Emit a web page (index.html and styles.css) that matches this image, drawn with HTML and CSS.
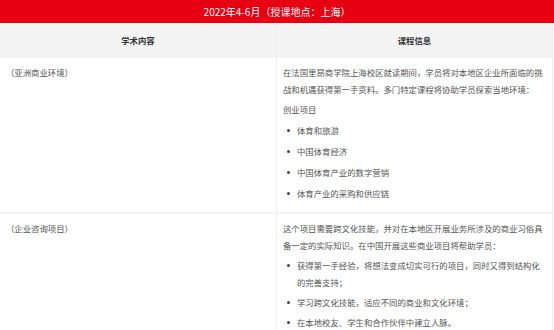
FILE: index.html
```html
<!DOCTYPE html>
<html lang="zh">
<head>
<meta charset="utf-8">
<link rel="stylesheet" href="styles.css">
</head>
<body>
<div class="title">2022年4-6月（授课地点：上海）</div>
<div class="table">
  <div class="row head">
    <div class="cell">学术内容</div>
    <div class="cell">课程信息</div>
  </div>
  <div class="row">
    <div class="cell left">（亚洲商业环境）</div>
    <div class="cell right">
      <p>在法国里昂商学院上海校区就读期间，学员将对本地区企业所面临的挑战和机遇获得第一手资料。多门特定课程将协助学员探索当地环境：</p>
      <p>创业项目</p>
      <ul>
        <li>体育和旅游</li>
        <li>中国体育经济</li>
        <li>中国体育产业的数字营销</li>
        <li>体育产业的采购和供应链</li>
      </ul>
    </div>
  </div>
  <div class="row">
    <div class="cell left">（企业咨询项目）</div>
    <div class="cell right tight">
      <p>这个项目需要跨文化技能，并对在本地区开展业务所涉及的商业习俗具备一定的实际知识。在中国开展这些商业项目将帮助学员：</p>
      <ul>
        <li>获得第一手经验，将想法变成切实可行的项目，同时又得到结构化的完善支持；</li>
        <li>学习跨文化技能，适应不同的商业和文化环境；</li>
        <li>在本地校友、学生和合作伙伴中建立人脉。</li>
      </ul>
    </div>
  </div>
</div>
</body>
</html>
```
FILE: styles.css
```css
* { box-sizing: border-box; }
html, body { margin: 0; padding: 0; background: #fff; }
body {
  font-family: "Noto Sans CJK SC", "Noto Sans", sans-serif;
  font-size: 8.4px;
  color: #555;
  overflow: hidden;
}
.title {
  height: 23px;
  background: #e60012;
  color: #fff;
  font-size: 10px;
  line-height: 23px;
  text-align: center;
}
.table {
  width: 553px;
  border-right: 1px solid #eee;
}
.row {
  display: grid;
  grid-template-columns: 277px 1fr;
  border-bottom: 2px solid #f4f4f4;
}
.row.head {
  background: #f4f4f4;
  height: 35px;
  border-bottom: 0;
}
.head .cell {
  text-align: center;
  font-weight: bold;
  color: #333;
  line-height: 35px;
  padding: 0;
}
.cell {
  padding: 6px 3px 10px 6px;
  line-height: 17px;
}
.cell.left {
  border-right: 1px solid #eee;
  padding-top: 6px;
}
.row.head .cell:first-child { border-right: 1px solid #eee; }
p { margin: 0 0 3px 0; }
ul { margin: 0; padding: 0; list-style: none; }
li {
  display: flex;
  margin-top: 4px;
  padding-right: 6px;
}
li::before {
  content: "";
  flex: none;
  width: 3px;
  height: 3px;
  border-radius: 50%;
  background: #444;
  margin: 7px 7px 0 4px;
}
.tight p { margin-bottom: 1px; }
.tight li { margin-top: 3px; }
```
